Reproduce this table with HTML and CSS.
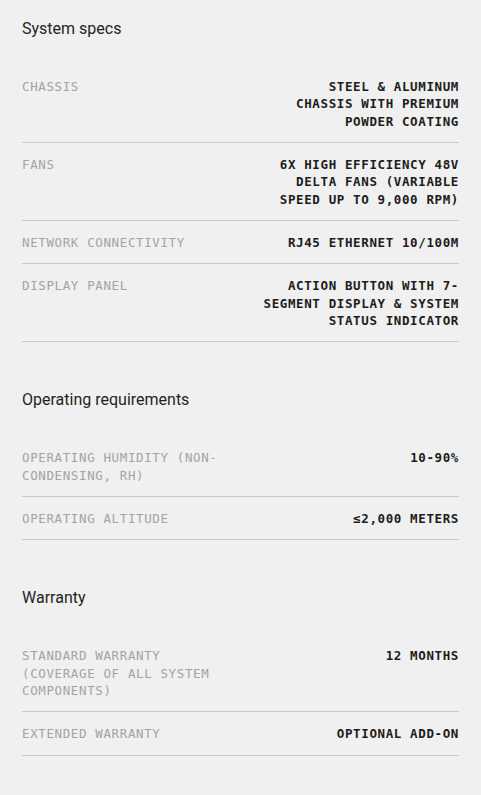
FILE: index.html
```html
<!DOCTYPE html>
<html lang="en">
<head>
<meta charset="utf-8">
<title>Specs</title>
<link rel="stylesheet" href="styles.css">
</head>
<body>
<main class="specs">
  <section class="group">
    <h2 class="group-title">System specs</h2>
    <dl class="spec-list">
      <div class="spec-row">
        <dt class="spec-label">CHASSIS</dt>
        <dd class="spec-value">STEEL &amp; ALUMINUM<br>CHASSIS WITH PREMIUM<br>POWDER COATING</dd>
      </div>
      <div class="spec-row">
        <dt class="spec-label">FANS</dt>
        <dd class="spec-value">6X HIGH EFFICIENCY 48V<br>DELTA FANS (VARIABLE<br>SPEED UP TO 9,000 RPM)</dd>
      </div>
      <div class="spec-row">
        <dt class="spec-label">NETWORK CONNECTIVITY</dt>
        <dd class="spec-value">RJ45 ETHERNET 10/100M</dd>
      </div>
      <div class="spec-row">
        <dt class="spec-label">DISPLAY PANEL</dt>
        <dd class="spec-value">ACTION BUTTON WITH 7-<br>SEGMENT DISPLAY &amp; SYSTEM<br>STATUS INDICATOR</dd>
      </div>
    </dl>
  </section>
  <section class="group">
    <h2 class="group-title">Operating requirements</h2>
    <dl class="spec-list">
      <div class="spec-row">
        <dt class="spec-label">OPERATING HUMIDITY (NON-<br>CONDENSING, RH)</dt>
        <dd class="spec-value">10-90%</dd>
      </div>
      <div class="spec-row">
        <dt class="spec-label">OPERATING ALTITUDE</dt>
        <dd class="spec-value">≤2,000 METERS</dd>
      </div>
    </dl>
  </section>
  <section class="group">
    <h2 class="group-title">Warranty</h2>
    <dl class="spec-list">
      <div class="spec-row">
        <dt class="spec-label">STANDARD WARRANTY<br>(COVERAGE OF ALL SYSTEM<br>COMPONENTS)</dt>
        <dd class="spec-value">12 MONTHS</dd>
      </div>
      <div class="spec-row">
        <dt class="spec-label">EXTENDED WARRANTY</dt>
        <dd class="spec-value">OPTIONAL ADD-ON</dd>
      </div>
    </dl>
  </section>
</main>
</body>
</html>
```

FILE: styles.css
```css
html, body {
  margin: 0;
  padding: 0;
  background: #f0f0f0;
}

.specs {
  padding: 19px 22px 0;
  display: flex;
  flex-direction: column;
  gap: 48px;
}

.group-title {
  margin: 0 0 26px;
  font-family: Roboto, "Noto Sans", sans-serif;
  font-size: 16px;
  line-height: 20px;
  font-weight: 400;
  color: #1f1f1f;
}

.spec-list {
  margin: 0;
}

.spec-row {
  display: flex;
  justify-content: space-between;
  gap: 16px;
  padding: 13px 0 12px;
  border-bottom: 1px solid #c9c9c9;
  font-family: "DejaVu Sans Mono", "Liberation Mono", monospace;
  font-size: 12.5px;
  line-height: 17.33px;
  letter-spacing: 0.62px;
}

.spec-label {
  margin: 0;
  color: #a3a3a3;
}

.spec-value {
  margin: 0;
  text-align: right;
  font-weight: 700;
  color: #1c1c1c;
}
```
